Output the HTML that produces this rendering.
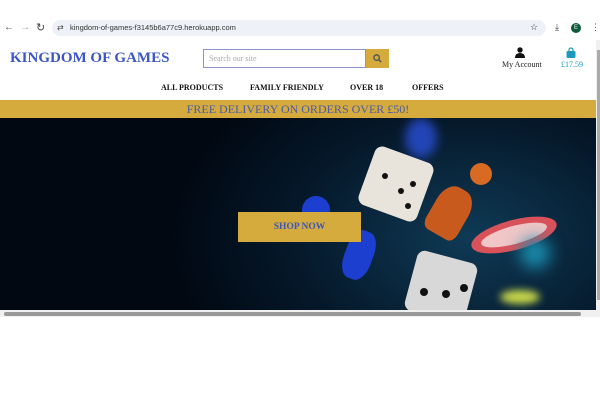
<!DOCTYPE html>
<html><head><style>
*{margin:0;padding:0;box-sizing:border-box}
body{width:600px;height:400px;background:#fff;position:relative;overflow:hidden;font-family:"Liberation Serif",serif}
.a{position:absolute}
</style></head><body>
<div class="a" style="left:0;top:0;width:600px;height:40px;background:#fff"></div>
<div class="a" style="left:4px;top:22px;font:10px 'Liberation Sans';color:#444">&#8592;</div>
<div class="a" style="left:20px;top:22px;font:10px 'Liberation Sans';color:#aaa">&#8594;</div>
<div class="a" style="left:36px;top:21px;font:11px 'Liberation Sans';color:#444">&#8635;</div>
<div class="a" style="left:52px;top:20px;width:494px;height:16px;border-radius:8px;background:#eef1f8"></div>
<div class="a" style="left:57px;top:23px;font:8px 'Liberation Sans';color:#444">&#8644;</div>
<div class="a" style="left:70px;top:23px;font:7.5px 'Liberation Sans';color:#333">kingdom-of-games-f3145b6a77c9.herokuapp.com</div>
<div class="a" style="left:530px;top:22px;font:9px 'Liberation Sans';color:#333">&#9734;</div>
<div class="a" style="left:555px;top:22px;font:9px 'Liberation Sans';color:#333">&#10515;</div>
<div class="a" style="left:571px;top:23px;width:10px;height:10px;border-radius:50%;background:#0d5a3a;color:#fff;font:6px/10px 'Liberation Sans';text-align:center">E</div>
<div class="a" style="left:591px;top:22px;font:9px 'Liberation Sans';color:#444">&#8942;</div>
<div class="a" style="left:10px;top:50px;font:bold 15px 'Liberation Serif';color:#3b55c7">KINGDOM OF GAMES</div>
<div class="a" style="left:203px;top:49px;width:163px;height:19px;border:1px solid #8a94c8;background:#fff"></div>
<div class="a" style="left:209px;top:54px;font:8px 'Liberation Serif';color:#aaa">Search our site</div>
<div class="a" style="left:366px;top:49px;width:23px;height:19px;background:#d4ab3c"></div>
<svg class="a" style="left:373px;top:54px" width="9" height="9" viewBox="0 0 10 10"><circle cx="4" cy="4" r="3" fill="none" stroke="#555" stroke-width="1.6"/><path d="M6.3 6.3L9 9" stroke="#555" stroke-width="1.8"/></svg>
<svg class="a" style="left:515px;top:47px" width="10" height="11" viewBox="0 0 10 11"><circle cx="5" cy="3" r="2.7" fill="#111"/><path d="M0 11Q0 6 5 6Q10 6 10 11Z" fill="#111"/></svg>
<div class="a" style="left:502px;top:60px;font:8px 'Liberation Serif';color:#222">My Account</div>
<svg class="a" style="left:566px;top:47px" width="10" height="11" viewBox="0 0 10 11"><path d="M3 4V3a2 2 0 0 1 4 0v1" fill="none" stroke="#1a9bbd" stroke-width="1.2"/><rect x="0.5" y="4" width="9" height="7" rx="1.5" fill="#1a9bbd"/></svg>
<div class="a" style="left:561px;top:60px;font:8px 'Liberation Serif';color:#1a9bbd">£17.59</div>
<div class="a" style="left:161px;top:83px;font:bold 8px 'Liberation Serif';color:#111">ALL PRODUCTS</div>
<div class="a" style="left:250px;top:83px;font:bold 8px 'Liberation Serif';color:#111">FAMILY FRIENDLY</div>
<div class="a" style="left:350px;top:83px;font:bold 8px 'Liberation Serif';color:#111">OVER 18</div>
<div class="a" style="left:412px;top:83px;font:bold 8px 'Liberation Serif';color:#111">OFFERS</div>
<div class="a" style="left:0;top:100px;width:596px;height:18px;background:#d4ab3c;text-align:center;font:12px/18px 'Liberation Serif';color:#4b5aa8">FREE DELIVERY ON ORDERS OVER £50!</div>
<div class="a" style="left:0;top:118px;width:596px;height:192px;background:radial-gradient(ellipse 300px 200px at 470px 120px,#0f3a55,#05182a 60%,#010812);overflow:hidden">
 <div class="a" style="left:405px;top:0;width:32px;height:40px;border-radius:50%;background:#2a4fd8;filter:blur(5px);opacity:.8"></div>
 <div class="a" style="left:365px;top:35px;width:62px;height:62px;background:#e8e4dc;border-radius:8px;transform:rotate(20deg)"></div>
 <div class="a" style="left:382px;top:55px;width:6px;height:6px;border-radius:50%;background:#111"></div>
 <div class="a" style="left:398px;top:70px;width:6px;height:6px;border-radius:50%;background:#111"></div>
 <div class="a" style="left:410px;top:63px;width:6px;height:6px;border-radius:50%;background:#111"></div>
 <div class="a" style="left:405px;top:85px;width:6px;height:6px;border-radius:50%;background:#111"></div>
 <div class="a" style="left:470px;top:45px;width:22px;height:22px;border-radius:50%;background:#d86a24"></div>
 <div class="a" style="left:432px;top:68px;width:36px;height:52px;border-radius:40% 40% 20% 20%;background:#c85a1e;transform:rotate(30deg)"></div>
 <div class="a" style="left:470px;top:102px;width:88px;height:30px;border-radius:50%;background:#d9525a;transform:rotate(-15deg)"></div>
 <div class="a" style="left:480px;top:108px;width:68px;height:18px;border-radius:50%;background:#f0c6c6;transform:rotate(-15deg)"></div>
 <div class="a" style="left:302px;top:78px;width:28px;height:28px;border-radius:50%;background:#1c3fd0"></div>
 <div class="a" style="left:345px;top:112px;width:28px;height:50px;border-radius:40%;background:#1c3fd0;transform:rotate(20deg)"></div>
 <div class="a" style="left:410px;top:138px;width:62px;height:62px;background:#d8d8d8;border-radius:8px;transform:rotate(15deg)"></div>
 <div class="a" style="left:420px;top:170px;width:8px;height:8px;border-radius:50%;background:#111"></div>
 <div class="a" style="left:442px;top:172px;width:8px;height:8px;border-radius:50%;background:#111"></div>
 <div class="a" style="left:460px;top:166px;width:8px;height:8px;border-radius:50%;background:#111"></div>
 <div class="a" style="left:500px;top:172px;width:40px;height:14px;border-radius:50%;background:#c8d84a;filter:blur(4px)"></div>
 <div class="a" style="left:520px;top:120px;width:30px;height:30px;border-radius:50%;background:#1a8eb0;filter:blur(8px)"></div>
</div>
<div class="a" style="left:238px;top:212px;width:123px;height:30px;background:#d4ab3c;text-align:center;font:bold 9.5px/30px 'Liberation Serif';color:#3b55b8">SHOP NOW</div>
<div class="a" style="left:596px;top:40px;width:4px;height:272px;background:#f0f0f0"></div>
<div class="a" style="left:597px;top:50px;width:3px;height:250px;background:#aaa"></div>
<div class="a" style="left:0;top:310px;width:600px;height:7px;background:#f0f0f0"></div>
<div class="a" style="left:4px;top:312px;width:577px;height:4px;border-radius:2px;background:#999"></div>
</body></html>
